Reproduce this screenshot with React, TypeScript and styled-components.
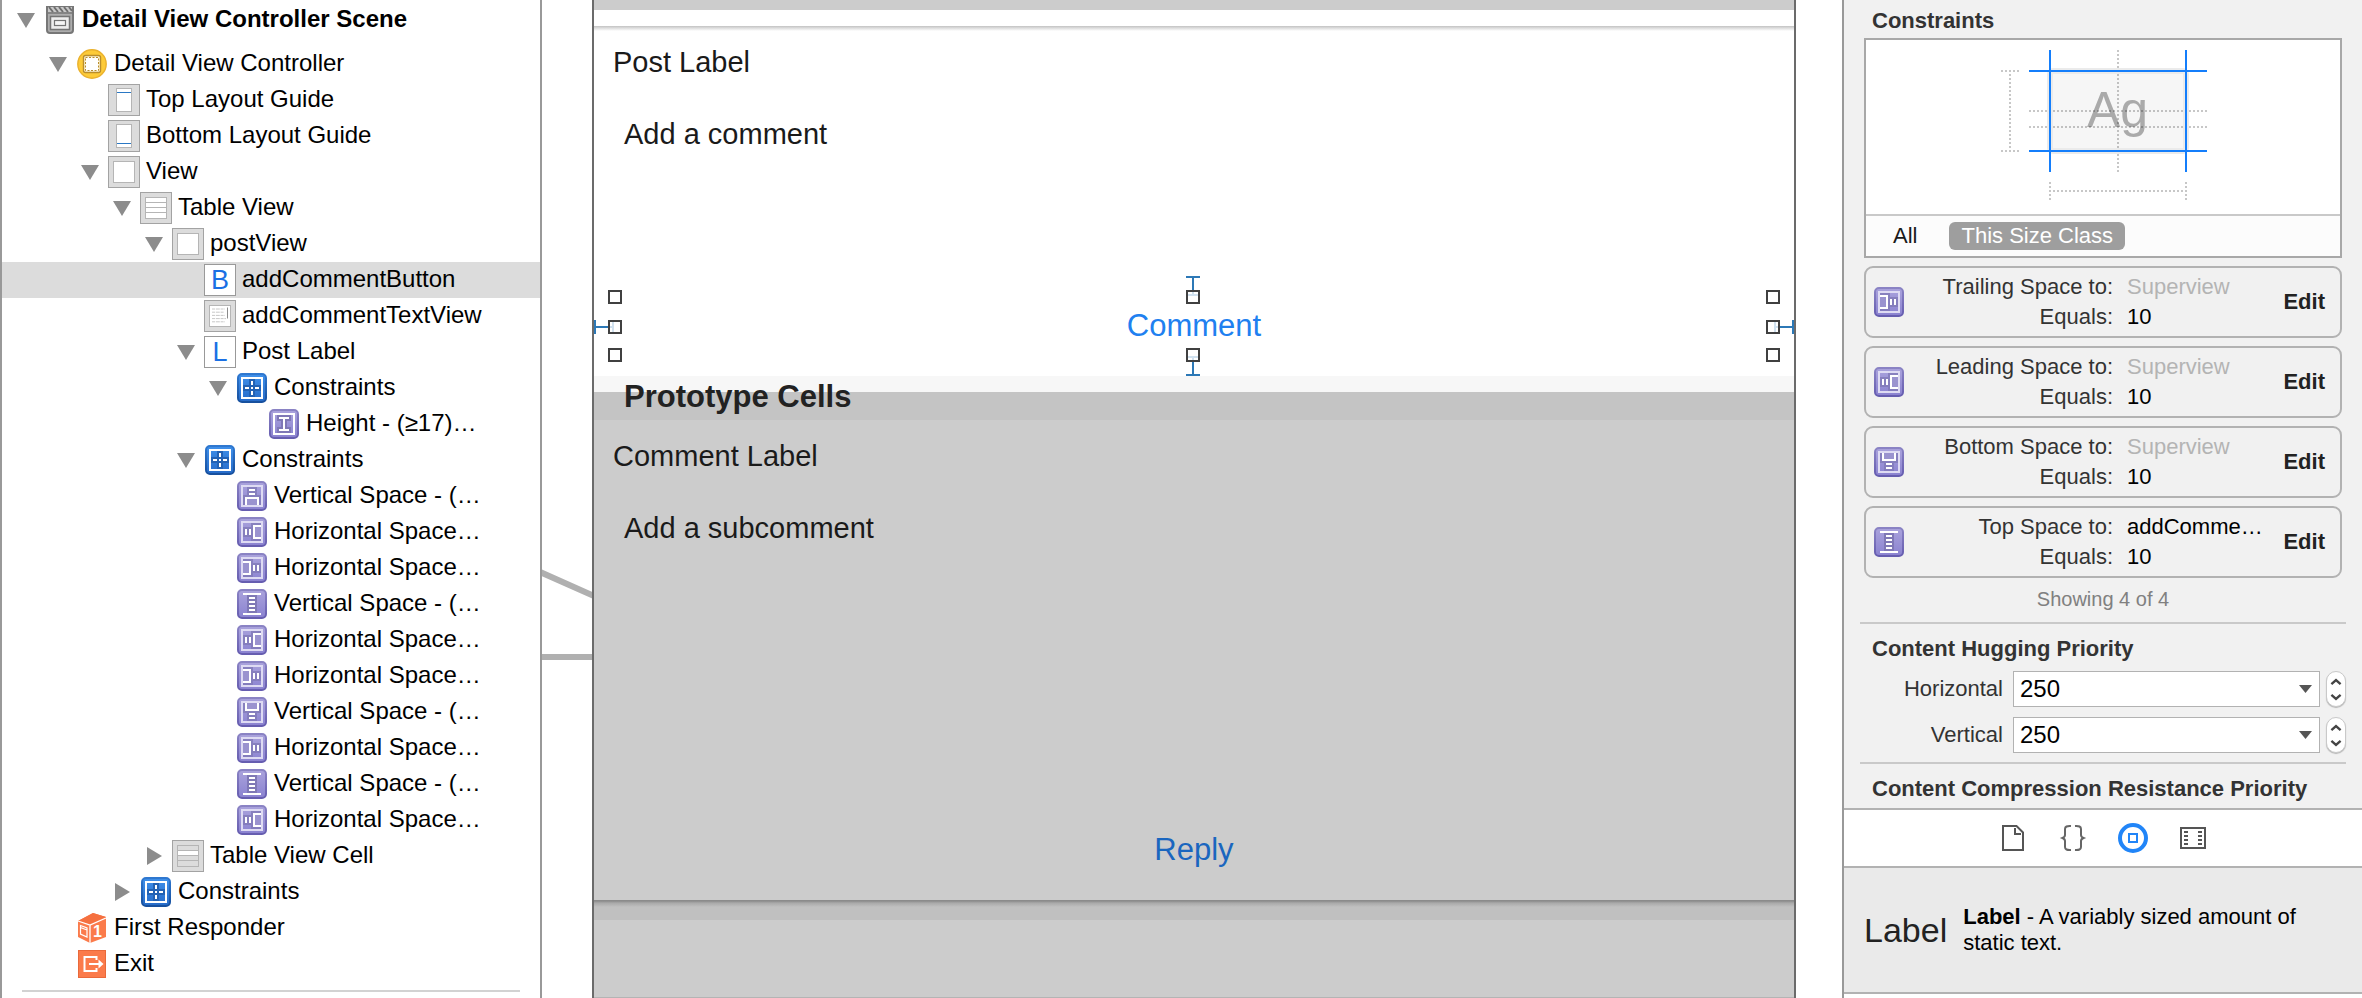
import React, { useState } from "react";
import styled, { createGlobalStyle, css } from "styled-components";

const GlobalStyle = createGlobalStyle`
  * { box-sizing: border-box; }
  body {
    margin: 0;
    background: #fff;
    color: #000;
    font-family: "Liberation Sans", Arial, Helvetica, sans-serif;
    font-size: 22px;
  }
  button, input, textarea { font: inherit; color: inherit; }
  h2, h3, p, ul, dl, dd { margin: 0; padding: 0; }
  ul { list-style: none; }
`;

const bareButton = css`
  border: 0;
  padding: 0;
  background: none;
  cursor: pointer;
`;

/* ---------- page ---------- */

const Workspace = styled.div`
  display: grid;
  grid-template-columns: 542px minmax(0, 1fr) 520px;
  height: 100vh;
  overflow: hidden;
`;

/* ---------- icons ---------- */

const Svg = styled.svg`
  display: block;
  flex: none;
  overflow: visible;
`;

type Kind =
  | "scene" | "controller" | "topGuide" | "bottomGuide" | "view" | "table"
  | "button" | "textView" | "label" | "cell" | "constraints" | "height"
  | "top" | "leading" | "trailing" | "bottom" | "between" | "responder" | "exit";

const SHADE = "#7f78b6";
const PALE = "#dedbf3";

const PurpleTile = ({ children }: { children: React.ReactNode }) => (
  <Svg width="30" height="30" viewBox="0 0 30 30" aria-hidden="true">
    <defs>
      <linearGradient id="purple" x1="0" y1="0" x2="0" y2="1">
        <stop offset="0" stopColor="#aaa3dc" />
        <stop offset="1" stopColor="#8a82d0" />
      </linearGradient>
      <linearGradient id="purpleEdge" x1="0" y1="0" x2="0" y2="1">
        <stop offset="0" stopColor="#8a83c4" />
        <stop offset="1" stopColor="#665db0" />
      </linearGradient>
    </defs>
    <rect x="1" y="1" width="28" height="28" rx="4" fill="url(#purple)" stroke="url(#purpleEdge)" strokeWidth="2" />
    {children}
  </Svg>
);

const edgeTransform: Record<string, string> = {
  trailing: "",
  leading: "matrix(-1 0 0 1 30 0)",
  bottom: "matrix(0 1 1 0 0 0)",
  top: "matrix(0 -1 1 0 0 30)",
};

const EdgeGlyph = ({ edge }: { edge: string }) => (
  <PurpleTile>
    <rect x="5" y="5" width="20" height="20" fill="none" stroke={PALE} strokeWidth="2" />
    <g transform={edgeTransform[edge]}>
      <path d="M6 6h10v4h8v10h-8v4h-10z" fill={SHADE} opacity="0.75" />
      <path d="M6 10h6v10h-6z" fill="#9a93cf" />
      <path d="M6 8h8v14h-8v-2h6v-10h-6z" fill="#fff" />
      <path d="M16 12h2v6h-2zM20 12h2v6h-2z" fill="#fff" />
    </g>
  </PurpleTile>
);

const FramedBox = ({ fill = "#dcdcdc", children }: { fill?: string; children?: React.ReactNode }) => (
  <Svg width="32" height="32" viewBox="0 0 32 32" aria-hidden="true">
    <rect x="0.5" y="0.5" width="31" height="31" fill={fill} stroke="#a3a3a3" />
    {children}
  </Svg>
);

const LetterBox = styled.span`
  flex: none;
  width: 32px;
  height: 32px;
  border: 1px solid #999;
  background: #fff;
  color: #1a70e4;
  font-size: 27px;
  line-height: 30px;
  text-align: center;
`;

const TypeIcon = ({ kind }: { kind: Kind }) => {
  switch (kind) {
    case "scene":
      return (
        <Svg width="28" height="28" viewBox="0 0 28 28" aria-hidden="true">
          <path d="M1 1h26v23a3 3 0 0 1-3 3h-20a3 3 0 0 1-3-3z" fill="#adadad" stroke="#777" strokeWidth="2" />
          <path d="M2 1h24v5h-24z" fill="#c9c9c9" />
          <path d="M3 1l4 5M8 1l4 5M13 1l4 5M18 1l4 5M23 1l3 4" stroke="#6f6f6f" strokeWidth="2" />
          <path d="M1 7h26" stroke="#777" strokeWidth="1.5" />
          <rect x="4.5" y="10.5" width="19" height="13" fill="#ededed" stroke="#747474" strokeWidth="1.5" />
          <rect x="8.5" y="14.5" width="11" height="5" fill="#f5f5f5" stroke="#747474" strokeWidth="1.2" />
        </Svg>
      );
    case "controller":
      return (
        <Svg width="30" height="30" viewBox="0 0 30 30" aria-hidden="true">
          <circle cx="15" cy="15" r="14.2" fill="#fdcb38" stroke="#eab12d" strokeWidth="1.4" />
          <rect x="6.5" y="6.5" width="17" height="17" rx="2" fill="#fdf3d2" stroke="#b98d2c" strokeWidth="1.4" />
          <rect x="8.5" y="8.5" width="13" height="13" fill="#fff" stroke="#b98d2c" strokeDasharray="2 1.5" />
        </Svg>
      );
    case "topGuide":
    case "bottomGuide":
      return (
        <FramedBox>
          <rect x="8.5" y="4.5" width="15" height="23" fill="#fff" stroke="#b5b5b5" />
          <path d={kind === "topGuide" ? "M9 8.5h14" : "M9 23.5h14"} stroke="#2a78c4" />
        </FramedBox>
      );
    case "view":
      return (
        <FramedBox>
          <rect x="5.5" y="5.5" width="21" height="21" fill="#fff" stroke="#b5b5b5" />
        </FramedBox>
      );
    case "table":
      return (
        <FramedBox>
          <rect x="5.5" y="5.5" width="21" height="21" fill="#fff" stroke="#b5b5b5" />
          <path d="M6 10.5h20M6 15.5h20M6 20.5h20" stroke="#b5b5b5" />
        </FramedBox>
      );
    case "cell":
      return (
        <FramedBox>
          <rect x="5.5" y="5.5" width="21" height="21" fill="none" stroke="#b5b5b5" />
          <rect x="6" y="11" width="20" height="4" fill="#fff" />
          <path d="M6 10.5h20M6 15.5h20M6 20.5h20" stroke="#b5b5b5" />
        </FramedBox>
      );
    case "textView":
      return (
        <FramedBox>
          <rect x="5.5" y="5.5" width="21" height="21" fill="#fff" stroke="#b5b5b5" />
          <path d="M8 9h13M8 12.2h12M8 15.4h13M8 18.6h14M8 21.8h13" stroke="#c8c8c8" strokeDasharray="3 .8 4 .8" />
          <path d="M23.5 7.5v11" stroke="#8a8a8a" />
        </FramedBox>
      );
    case "button":
      return <LetterBox aria-hidden="true">B</LetterBox>;
    case "label":
      return <LetterBox aria-hidden="true">L</LetterBox>;
    case "constraints":
      return (
        <Svg width="30" height="30" viewBox="0 0 30 30" aria-hidden="true">
          <defs>
            <linearGradient id="blue" x1="0" y1="0" x2="0" y2="1">
              <stop offset="0" stopColor="#3f90ea" />
              <stop offset="1" stopColor="#266bc8" />
            </linearGradient>
            <linearGradient id="blueEdge" x1="0" y1="0" x2="0" y2="1">
              <stop offset="0" stopColor="#2f78d0" />
              <stop offset="1" stopColor="#17509e" />
            </linearGradient>
          </defs>
          <rect x="1" y="1" width="28" height="28" rx="4" fill="url(#blue)" stroke="url(#blueEdge)" strokeWidth="2" />
          <rect x="5" y="5" width="20" height="20" fill="none" stroke="#fff" strokeWidth="2" />
          <path d="M12 6h6v6h6v6h-6v6h-6v-6h-6v-6h6z" fill="#2262b4" />
          <path d="M14 8h2v4h-2zM14 18h2v4h-2zM8 14h4v2h-4zM18 14h4v2h-4zM14 14h2v2h-2z" fill="#fff" />
        </Svg>
      );
    case "height":
      return (
        <PurpleTile>
          <rect x="5" y="5" width="20" height="20" fill="none" stroke="#fff" strokeWidth="2" />
          <path d="M8 6h14v6h-4v6h4v6h-14v-6h4v-6h-4z" fill={SHADE} />
          <path d="M10 8h10v2h-4v10h4v2h-10v-2h4v-10h-4z" fill="#fff" />
        </PurpleTile>
      );
    case "between":
      return (
        <PurpleTile>
          <path d="M10 6h10v18h-10z" fill={SHADE} />
          <path d="M6 4h18v2h-18zM6 24h18v2h-18zM12 8h6v2h-6zM12 12h6v2h-6zM12 16h6v2h-6zM12 20h6v2h-6z" fill="#fff" />
        </PurpleTile>
      );
    case "responder":
      return (
        <Svg width="28" height="30" viewBox="0 0 28 30" aria-hidden="true">
          <path d="M15 0l13 4v20l-16 6-12-6v-16z" fill="#fb7b4b" />
          <path d="M15 0l13 4-16 7-12-3z" fill="#f5703f" />
          <path d="M0 8l12 4 16-7M12 12v18" fill="none" stroke="#fff" strokeWidth="1.3" />
          <path d="M2.500 12.500l6.500 2.500v9l-6.500-3zM2.500 14.500l6.500 2.500" fill="none" stroke="#fff" strokeWidth="1.2" />
          <text x="15" y="24" fill="#fff" fontSize="16" fontWeight="700">1</text>
        </Svg>
      );
    case "exit":
      return (
        <Svg width="28" height="28" viewBox="0 0 28 28" aria-hidden="true">
          <rect x="0.5" y="0.5" width="27" height="27" fill="#fb7b4b" stroke="#e9693a" />
          <path d="M18.500 10v-3h-12v14h12v-3" fill="none" stroke="#fff" strokeWidth="2" />
          <path d="M11 14h12" stroke="#fff" strokeWidth="2" />
          <path d="M20.500 9.500l5 4.500-5 4.500z" fill="#fff" />
        </Svg>
      );
    default:
      return <EdgeGlyph edge={kind} />;
  }
};

/* ---------- outline ---------- */

const Outline = styled.nav`
  border-left: 2px solid #999;
  border-right: 2px solid #999;
  background: #fff;
  overflow: hidden;
`;

const Row = styled.li<{ $level: number; $selected?: boolean; $header?: boolean }>`
  display: flex;
  align-items: center;
  height: ${(p) => (p.$header ? 40 : 36)}px;
  margin-bottom: ${(p) => (p.$header ? 6 : 0)}px;
  padding-left: ${(p) => 15 + p.$level * 32}px;
  background: ${(p) => (p.$selected ? "#dcdcdc" : "transparent")};
  font-weight: ${(p) => (p.$header ? 700 : 400)};
`;

const Toggle = styled.button`
  ${bareButton}
  display: flex;
  justify-content: center;
  width: 18px;
`;

const ToggleSpace = styled.span`
  width: 18px;
`;

const IconSlot = styled.span`
  display: flex;
  justify-content: center;
  flex: none;
  width: 32px;
  margin: 0 6px 0 9px;
`;

const Name = styled.span`
  padding-bottom: 2px;
  font-size: 24px;
  white-space: nowrap;
`;

const OutlineRule = styled.hr`
  height: 2px;
  margin: 8px 20px 0;
  border: 0;
  background: #d2d2d2;
`;

type Item = { name: string; level: number; kind: Kind; open?: boolean };

const items: Item[] = [
  { name: "Detail View Controller Scene", level: 0, kind: "scene", open: true },
  { name: "Detail View Controller", level: 1, kind: "controller", open: true },
  { name: "Top Layout Guide", level: 2, kind: "topGuide" },
  { name: "Bottom Layout Guide", level: 2, kind: "bottomGuide" },
  { name: "View", level: 2, kind: "view", open: true },
  { name: "Table View", level: 3, kind: "table", open: true },
  { name: "postView", level: 4, kind: "view", open: true },
  { name: "addCommentButton", level: 5, kind: "button" },
  { name: "addCommentTextView", level: 5, kind: "textView" },
  { name: "Post Label", level: 5, kind: "label", open: true },
  { name: "Constraints", level: 6, kind: "constraints", open: true },
  { name: "Height - (≥17)…", level: 7, kind: "height" },
  { name: "Constraints", level: 5, kind: "constraints", open: true },
  { name: "Vertical Space - (…", level: 6, kind: "top" },
  { name: "Horizontal Space…", level: 6, kind: "leading" },
  { name: "Horizontal Space…", level: 6, kind: "trailing" },
  { name: "Vertical Space - (…", level: 6, kind: "between" },
  { name: "Horizontal Space…", level: 6, kind: "leading" },
  { name: "Horizontal Space…", level: 6, kind: "trailing" },
  { name: "Vertical Space - (…", level: 6, kind: "bottom" },
  { name: "Horizontal Space…", level: 6, kind: "trailing" },
  { name: "Vertical Space - (…", level: 6, kind: "between" },
  { name: "Horizontal Space…", level: 6, kind: "leading" },
  { name: "Table View Cell", level: 4, kind: "cell", open: false },
  { name: "Constraints", level: 3, kind: "constraints", open: false },
  { name: "First Responder", level: 1, kind: "responder" },
  { name: "Exit", level: 1, kind: "exit" },
];

const Disclosure = ({ open, name }: { open: boolean; name: string }) => (
  <Toggle type="button" aria-label={`Toggle ${name}`} aria-expanded={open}>
    {open ? (
      <Svg width="18" height="15" viewBox="0 0 18 15"><path d="M0 0h18l-9 15z" fill="#8c8c8c" /></Svg>
    ) : (
      <Svg width="15" height="18" viewBox="0 0 15 18"><path d="M0 0v18l15-9z" fill="#8c8c8c" /></Svg>
    )}
  </Toggle>
);

const OutlinePanel = () => (
  <Outline aria-label="Document outline">
    <ul>
      {items.map((it, i) => (
        <Row key={i} $level={it.level} $header={i === 0} $selected={it.name === "addCommentButton"}>
          {it.open === undefined ? <ToggleSpace /> : <Disclosure open={it.open} name={it.name} />}
          <IconSlot><TypeIcon kind={it.kind} /></IconSlot>
          <Name>{it.name}</Name>
        </Row>
      ))}
    </ul>
    <OutlineRule />
  </Outline>
);

/* ---------- canvas ---------- */

const Canvas = styled.main`
  display: grid;
  grid-template-columns: 50px minmax(0, 1fr) 46px;
  overflow: hidden;
`;

const Device = styled.div`
  display: flex;
  flex-direction: column;
  border: solid #6b6b6b;
  border-width: 0 2px;
  background: #ccc;
`;

const StatusStrip = styled.div`
  height: 26px;
  border-top: 10px solid #ccc;
  background: #fff;
`;

const Cell = styled.section<{ $dim?: boolean }>`
  display: flex;
  flex-direction: column;
  padding: 19px 19px 20px;
  background: ${(p) =>
    p.$dim ? "#ccc" : "linear-gradient(#c2c2c2, #dcdcdc 2px, #fff 5px)"};
  color: #1a1a1a;
  font-size: 29px;
  line-height: 34px;
`;

const TextView = styled.textarea<{ $tall?: boolean }>`
  display: block;
  width: 100%;
  height: ${(p) => (p.$tall ? 309 : 179)}px;
  margin: 18px 0 20px;
  padding: 20px 11px;
  border: 0;
  outline: 0;
  background: transparent;
  resize: none;
`;

const ButtonFrame = styled.div`
  position: relative;
  margin: 0 1px;
`;

const LinkButton = styled.button<{ $dim?: boolean }>`
  ${bareButton}
  display: block;
  width: 100%;
  height: 60px;
  color: ${(p) => (p.$dim ? "#1a66bf" : "#2080f0")};
  font-size: 31px;
`;

type Spot = { x: "start" | "middle" | "end"; y: "start" | "middle" | "end" };

const along = (v: string, near: string, far: string, mid: string, shift: number) =>
  v === "start" ? `${near}: -6px;` : v === "end" ? `${far}: -6px;` : `${mid}: calc(50% - ${shift}px);`;

const Handle = styled.span<{ $spot: Spot }>`
  position: absolute;
  ${(p) => along(p.$spot.x, "left", "right", "left", 8)}
  ${(p) => along(p.$spot.y, "top", "bottom", "top", 6)}
  width: 14px;
  height: 14px;
  border: 2px solid #404040;
  background: rgba(255, 255, 255, 0.78);
`;

const Strut = styled.span<{ $side: "top" | "bottom" | "left" | "right" }>`
  position: absolute;
  ${(p) =>
    p.$side === "top" || p.$side === "bottom"
      ? css`
          left: calc(50% - 8px);
          ${p.$side}: -20px;
          width: 14px;
          height: 20px;
          border: solid #2c78b6;
          border-width: 2px 0;
          background: linear-gradient(#2c78b6, #2c78b6) center / 2px 100% no-repeat;
        `
      : css`
          top: calc(50% - 6px);
          ${p.$side}: -20px;
          width: 20px;
          height: 14px;
          border: solid #2c78b6;
          border-width: 0 2px;
          background: linear-gradient(#2c78b6, #2c78b6) center / 100% 2px no-repeat;
        `}
`;

const PrototypeHeader = styled.h2`
  height: 44px;
  padding-left: 30px;
  background: linear-gradient(#f7f7f7 16px, #c4c4c4 16px);
  color: #222;
  font-size: 31px;
  line-height: 42px;
`;

const TableFooter = styled.div`
  height: 20px;
  background: linear-gradient(#8b8b8b 1px, #a9a9a9 3px, #c0c0c0 7px);
`;

const EmptyTable = styled.div`
  flex: 1;
  border-bottom: 1px solid #b4b4b4;
`;

const spots: Spot[] = [
  { x: "start", y: "start" }, { x: "middle", y: "start" }, { x: "end", y: "start" },
  { x: "start", y: "middle" }, { x: "end", y: "middle" },
  { x: "start", y: "end" }, { x: "middle", y: "end" }, { x: "end", y: "end" },
];

const CanvasPanel = () => (
  <Canvas>
    <Svg width="50" height="700" viewBox="0 0 50 700" aria-hidden="true">
      <path d="M-2 572l54 24M0 657h50" stroke="#b0b0b0" strokeWidth="6" />
    </Svg>
    <Device>
      <StatusStrip />
      <Cell>
        <label htmlFor="post-text">Post Label</label>
        <TextView id="post-text" defaultValue="Add a comment" spellCheck={false} />
        <ButtonFrame>
          <LinkButton type="button">Comment</LinkButton>
          <Strut $side="top" />
          <Strut $side="bottom" />
          <Strut $side="left" />
          <Strut $side="right" />
          {spots.map((s) => (
            <Handle key={s.x + s.y} $spot={s} />
          ))}
        </ButtonFrame>
      </Cell>
      <PrototypeHeader>Prototype Cells</PrototypeHeader>
      <Cell $dim>
        <label htmlFor="reply-text">Comment Label</label>
        <TextView id="reply-text" $tall defaultValue="Add a subcomment" spellCheck={false} />
        <LinkButton type="button" $dim>Reply</LinkButton>
      </Cell>
      <TableFooter />
      <EmptyTable />
    </Device>
  </Canvas>
);

/* ---------- inspector ---------- */

const Inspector = styled.aside`
  display: flex;
  flex-direction: column;
  border-left: 2px solid #999;
  background: #f1f1f1;
  overflow: hidden;
`;

const InspectorBody = styled.div`
  padding: 8px 16px 6px;
`;

const Heading = styled.h3`
  padding-left: 12px;
  color: #333;
  font-size: 22px;
  line-height: 26px;
  white-space: nowrap;
`;

const SizeBox = styled.div`
  margin: 4px 4px 8px;
  border: 2px solid #a8a8a8;
  background: #fff;
`;

const Diagram = styled.div`
  display: flex;
  justify-content: center;
  padding: 10px 0 14px;
`;

const FilterBar = styled.div`
  display: flex;
  align-items: center;
  gap: 20px;
  height: 42px;
  padding: 0 15px;
  border-top: 2px solid #c9c9c9;
  background: #fcfcfc;
`;

const FilterButton = styled.button<{ $on: boolean }>`
  ${bareButton}
  height: 28px;
  padding: 0 12px;
  border-radius: 6px;
  background: ${(p) => (p.$on ? "#9e9e9e" : "transparent")};
  color: ${(p) => (p.$on ? "#fff" : "#1a1a1a")};
  line-height: 28px;
`;

const Cards = styled.ul`
  display: grid;
  gap: 8px;
  margin: 0 4px;
`;

const Card = styled.li`
  display: flex;
  align-items: center;
  height: 72px;
  padding: 0 15px 0 8px;
  border: 2px solid #b2b2b2;
  border-radius: 9px;
`;

const Facts = styled.dl`
  flex: 1;
  display: grid;
  grid-template-columns: 209px 1fr;
  column-gap: 14px;
  color: #333;
  line-height: 30px;
  white-space: nowrap;

  dt { text-align: right; }
`;

const Fact = styled.dd<{ $muted?: boolean }>`
  color: ${(p) => (p.$muted ? "#b4b4b4" : "#000")};
`;

const EditButton = styled.button`
  ${bareButton}
  color: #222;
  font-weight: 700;
`;

const Count = styled.p`
  padding: 8px 0 10px;
  color: #808080;
  font-size: 20px;
  line-height: 26px;
  text-align: center;
`;

const Rule = styled.hr`
  height: 2px;
  margin: 0 0 12px;
  border: 0;
  background: #c9c9c9;
`;

const Field = styled.div`
  display: grid;
  grid-template-columns: 143px minmax(0, 1fr) 20px;
  align-items: center;
  height: 36px;
  margin: 9px 0 10px;
  & + & { margin-top: 0; margin-bottom: 9px; }
`;

const FieldLabel = styled.label`
  color: #333;
  text-align: right;
`;

const Combo = styled.div`
  display: flex;
  align-items: center;
  height: 36px;
  margin: 0 6px 0 10px;
  padding-right: 7px;
  border: 1px solid #b2b2b2;
  background: #fff;
`;

const ComboInput = styled.input`
  flex: 1;
  min-width: 0;
  padding: 0 0 0 6px;
  border: 0;
  outline: 0;
  background: none;
  font-size: 24px;
`;

const IconButton = styled.button`
  ${bareButton}
`;

const Stepper = styled.div`
  display: flex;
  flex-direction: column;
  align-items: center;
  justify-content: center;
  gap: 9px;
  height: 36px;
  border: 1px solid #c9c9c9;
  border-radius: 10px;
  background: #fff;
  box-shadow: 0 1px 1px rgba(0, 0, 0, 0.25);
`;

const LibraryTabs = styled.div`
  display: flex;
  justify-content: center;
  height: 60px;
  border: solid #b2b2b2;
  border-width: 2px 0;
  background: #fff;
`;

const LibraryTab = styled.button`
  ${bareButton}
  display: grid;
  place-items: center;
  width: 60px;
`;

const LibraryItem = styled.div`
  display: flex;
  align-items: center;
  gap: 16px;
  height: 126px;
  padding: 0 24px 0 20px;
  border-bottom: 2px solid #b2b2b2;
  background: #eaeaea;
  line-height: 26px;
`;

const Sample = styled.span`
  color: #222;
  font-size: 34px;
`;

const LibraryRest = styled.div`
  flex: 1;
  background: #fff;
`;

const SizeDiagram = () => (
  <Svg width="206" height="150" viewBox="2000 50 206 150" role="img" aria-label="Constraint diagram">
    <rect x="2050" y="71" width="136" height="80" rx="3" fill="#f6f6f6" stroke="#ebebeb" strokeWidth="6" />
    <text x="2087" y="127" fontSize="50" fill="#aaa">Ag</text>
    <path
      d="M2118 50v122M2029 111h178M2029 127h178M2001 71h18M2001 151h18M2010 74v76M2050 182v18M2186 182v18M2053 191h132"
      fill="none" stroke="#000" strokeOpacity="0.22" strokeWidth="2" strokeDasharray="2 2"
    />
    <path d="M2029 71h178M2029 151h178M2050 50v122M2186 50v122" stroke="#147efb" strokeWidth="2" />
  </Svg>
);

const constraints: { kind: Kind; label: string; target: string; muted: boolean }[] = [
  { kind: "trailing", label: "Trailing Space to:", target: "Superview", muted: true },
  { kind: "leading", label: "Leading Space to:", target: "Superview", muted: true },
  { kind: "bottom", label: "Bottom Space to:", target: "Superview", muted: true },
  { kind: "between", label: "Top Space to:", target: "addComme…", muted: false },
];

const PriorityField = ({ name }: { name: string }) => {
  const [value, setValue] = useState("250");
  const step = (by: number) => setValue(String((Number(value) || 0) + by));
  return (
    <Field>
      <FieldLabel htmlFor={name}>{name}</FieldLabel>
      <Combo>
        <ComboInput id={name} value={value} onChange={(e) => setValue(e.target.value)} />
        <IconButton type="button" aria-label={`${name} presets`}>
          <Svg width="13" height="8" viewBox="0 0 13 8"><path d="M0 0h13l-6.500 8z" fill="#555" /></Svg>
        </IconButton>
      </Combo>
      <Stepper>
        <IconButton type="button" aria-label={`Increase ${name}`} onClick={() => step(1)}>
          <Svg width="10" height="6" viewBox="0 0 10 6"><path d="M.4 5.200l4.600-4 4.600 4" fill="none" stroke="#444" strokeWidth="2.400" /></Svg>
        </IconButton>
        <IconButton type="button" aria-label={`Decrease ${name}`} onClick={() => step(-1)}>
          <Svg width="10" height="6" viewBox="0 0 10 6"><path d="M.4 .8l4.600 4 4.600-4" fill="none" stroke="#444" strokeWidth="2.400" /></Svg>
        </IconButton>
      </Stepper>
    </Field>
  );
};

const InspectorPanel = () => {
  const [filter, setFilter] = useState("This Size Class");
  return (
    <Inspector>
      <InspectorBody>
        <Heading>Constraints</Heading>
        <SizeBox>
          <Diagram><SizeDiagram /></Diagram>
          <FilterBar>
            {["All", "This Size Class"].map((f) => (
              <FilterButton key={f} type="button" $on={f === filter} onClick={() => setFilter(f)}>{f}</FilterButton>
            ))}
          </FilterBar>
        </SizeBox>
        <Cards>
          {constraints.map((c) => (
            <Card key={c.label}>
              <TypeIcon kind={c.kind} />
              <Facts>
                <dt>{c.label}</dt>
                <Fact $muted={c.muted}>{c.target}</Fact>
                <dt>Equals:</dt>
                <Fact>10</Fact>
              </Facts>
              <EditButton type="button">Edit</EditButton>
            </Card>
          ))}
        </Cards>
        <Count>Showing 4 of 4</Count>
        <Rule />
        <Heading>Content Hugging Priority</Heading>
        <PriorityField name="Horizontal" />
        <PriorityField name="Vertical" />
        <Rule />
        <Heading>Content Compression Resistance Priority</Heading>
      </InspectorBody>
      <LibraryTabs>
        <LibraryTab type="button" aria-label="File templates">
          <Svg width="22" height="26" viewBox="0 0 22 26">
            <path d="M1 1h13.500l6.500 6.500v17.500h-20z" fill="none" stroke="#555" strokeWidth="2" />
            <path d="M13 3v6h6" fill="none" stroke="#555" strokeWidth="2" />
          </Svg>
        </LibraryTab>
        <LibraryTab type="button" aria-label="Code snippets">
          <Svg width="22" height="26" viewBox="0 0 22 26">
            <path
              d="M9 1q-6-.5-6 3v6q0 2-2.500 3 2.500 1 2.500 3v6q0 3.500 6 3M13 1q6-.5 6 3v6q0 2 2.500 3-2.500 1-2.500 3v6q0 3.500-6 3"
              fill="none" stroke="#666" strokeWidth="2"
            />
          </Svg>
        </LibraryTab>
        <LibraryTab type="button" aria-label="Objects">
          <Svg width="30" height="30" viewBox="0 0 30 30">
            <circle cx="15" cy="15" r="13" fill="none" stroke="#2185f8" strokeWidth="4" />
            <rect x="11" y="11" width="8" height="8" fill="none" stroke="#2185f8" strokeWidth="2" />
          </Svg>
        </LibraryTab>
        <LibraryTab type="button" aria-label="Media">
          <Svg width="26" height="22" viewBox="0 0 26 22">
            <rect x="1" y="1" width="24" height="20" fill="none" stroke="#555" strokeWidth="2" />
            <path d="M4 5h4M4 9h4M4 13h4M4 17h4M18 5h4M18 9h4M18 13h4M18 17h4" stroke="#555" strokeWidth="2" />
          </Svg>
        </LibraryTab>
      </LibraryTabs>
      <LibraryItem>
        <Sample>Label</Sample>
        <p>
          <b>Label</b> - A variably sized amount of
          <br />
          static text.
        </p>
      </LibraryItem>
      <LibraryRest />
    </Inspector>
  );
};

export default function App() {
  return (
    <>
      <GlobalStyle />
      <Workspace>
        <OutlinePanel />
        <CanvasPanel />
        <InspectorPanel />
      </Workspace>
    </>
  );
}
